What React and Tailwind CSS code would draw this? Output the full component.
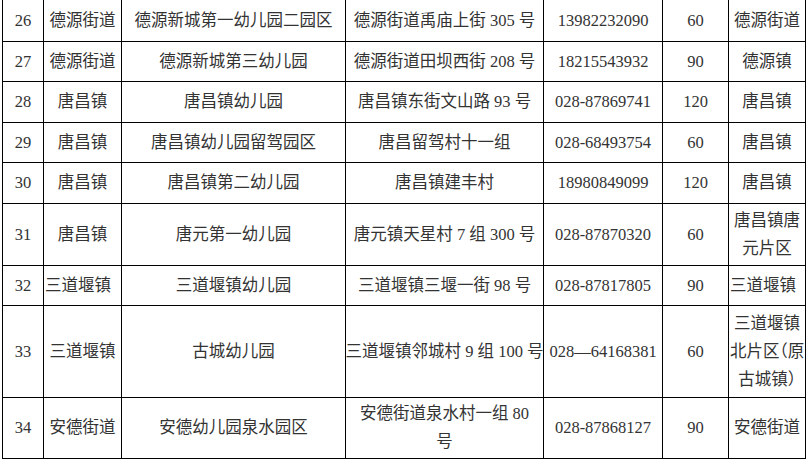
const cols = 'grid grid-cols-[41px_78px_224px_198px_119px_66px_77px]';

const rows = [
  { h: 'h-[42px]', c: ['26', '德源街道', '德源新城第一幼儿园二园区', '德源街道禹庙上街 305 号', '13982232090', '60', '德源街道'] },
  { h: 'h-[40px]', c: ['27', '德源街道', '德源新城第三幼儿园', '德源街道田坝西街 208 号', '18215543932', '90', '德源镇'] },
  { h: 'h-[41px]', c: ['28', '唐昌镇', '唐昌镇幼儿园', '唐昌镇东街文山路 93 号', '028-87869741', '120', '唐昌镇'] },
  { h: 'h-[40px]', c: ['29', '唐昌镇', '唐昌镇幼儿园留驾园区', '唐昌留驾村十一组', '028-68493754', '60', '唐昌镇'] },
  { h: 'h-[41px]', c: ['30', '唐昌镇', '唐昌镇第二幼儿园', '唐昌镇建丰村', '18980849099', '120', '唐昌镇'] },
  { h: 'h-[62px]', c: ['31', '唐昌镇', '唐元第一幼儿园', '唐元镇天星村 7 组 300 号', '028-87870320', '60', ['唐昌镇唐', '元片区']] },
  { h: 'h-[40px]', left: [1, 6], c: ['32', '三道堰镇', '三道堰镇幼儿园', '三道堰镇三堰一街 98 号', '028-87817805', '90', '三道堰镇'] },
  { h: 'h-[92px]', c: ['33', '三道堰镇', '古城幼儿园', '三道堰镇邻城村 9 组 100 号', '028—64168381', '60', ['三道堰镇', '北片区（原', '古城镇）']] },
  { h: 'h-[61px]', c: ['34', '安德街道', '安德幼儿园泉水园区', ['安德街道泉水村一组 80', '号'], '028-87868127', '90', '安德街道'] },
];

function Cell({ value, left }) {
  const lines = Array.isArray(value) ? value : [value];
  return (
    <div
      className={
        'flex flex-col justify-center border-r border-black overflow-visible whitespace-nowrap ' +
        (left ? 'items-start pl-[1px]' : 'items-center')
      }
    >
      {lines.map((l, i) => (
        <span key={i} className="block text-center [font-feature-settings:'halt']">
          {l}
        </span>
      ))}
    </div>
  );
}

export default function App() {
  return (
    <div className="w-[807px] h-[460px] bg-white overflow-hidden">
      <div className="ml-[2px] w-[804px] border-l border-black text-[16.5px] leading-[28px] text-[#333] font-['Liberation_Serif','Noto_Sans_CJK_SC',serif]">
        {rows.map((r, i) => (
          <div key={i} className={`${cols} ${r.h} border-b border-black`}>
            {r.c.map((v, j) => (
              <Cell key={j} value={v} left={r.left && r.left.includes(j)} />
            ))}
          </div>
        ))}
      </div>
    </div>
  );
}
